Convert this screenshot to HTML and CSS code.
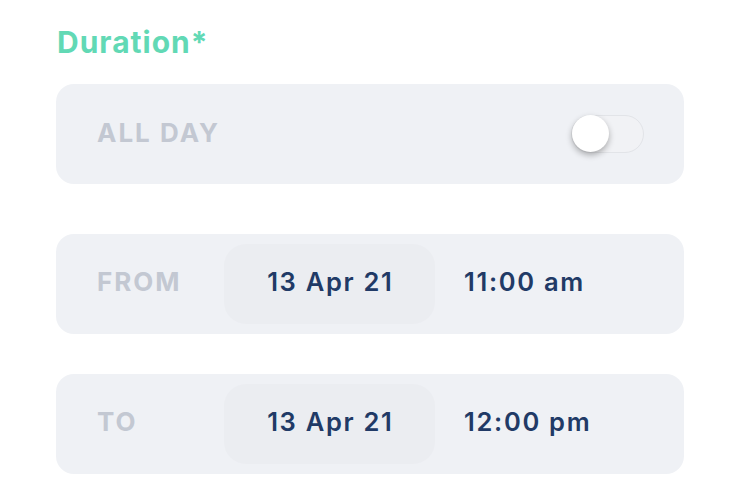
FILE: index.html
```html
<!DOCTYPE html>
<html>
<head>
<meta charset="utf-8">
<link rel="stylesheet" href="styles.css">
</head>
<body>
<div class="form">
  <h2 class="title">Duration*</h2>
  <div class="card allday">
    <span class="label">ALL DAY</span>
    <div class="toggle"><div class="knob"></div></div>
  </div>
  <div class="card row first">
    <span class="label col">FROM</span>
    <div class="datebox">13 Apr 21</div>
    <span class="time">11:00 am</span>
  </div>
  <div class="card row">
    <span class="label col">TO</span>
    <div class="datebox">13 Apr 21</div>
    <span class="time">12:00 pm</span>
  </div>
</div>
</body>
</html>
```
FILE: styles.css
```css
html, body {
  margin: 0;
  padding: 0;
  background: #ffffff;
}
body {
  font-family: Inter, "Noto Sans", sans-serif;
}
.form {
  padding: 0 52px 0 56px;
  display: flex;
  flex-direction: column;
}
.title {
  margin: 24px 0 0 1px;
  height: 60px;
  font-size: 30px;
  line-height: 36px;
  font-weight: 700;
  color: #62d9b5;
  letter-spacing: 1px;
}
.card {
  height: 100px;
  border-radius: 18px;
  background: #eff1f5;
  display: flex;
  align-items: center;
  padding-left: 41px;
  box-sizing: border-box;
}
.allday {
  justify-content: space-between;
  padding-right: 40px;
}
.label {
  font-size: 26px;
  font-weight: 700;
  color: #c3c8d2;
  letter-spacing: 2px;
}
.allday .label {
  margin-bottom: 4px;
}
.row {
  margin-top: 40px;
}
.row.first {
  margin-top: 50px;
}
.col {
  width: 127px;
  margin-bottom: 5px;
}
.datebox {
  width: 211px;
  height: 80px;
  border-radius: 22px;
  background: #ebedf1;
  display: flex;
  align-items: center;
  justify-content: center;
  box-sizing: border-box;
  padding-bottom: 5px;
  font-size: 25.5px;
  font-weight: 600;
  color: #213a66;
  letter-spacing: 1.7px;
  text-indent: 1.7px;
}
.time {
  margin-left: 29px;
  margin-bottom: 5px;
  font-size: 25.5px;
  font-weight: 600;
  color: #213a66;
  letter-spacing: 1.7px;
}
.toggle {
  width: 73px;
  height: 38px;
  border-radius: 19px;
  border: 1.5px solid #e2e4e8;
  background: #f1f2f5;
  box-sizing: border-box;
  position: relative;
  margin-bottom: 1px;
}
.knob {
  position: absolute;
  left: 0;
  top: -0.5px;
  width: 37px;
  height: 37px;
  border-radius: 50%;
  background: #ffffff;
  box-shadow: 0 3px 6px rgba(0, 0, 0, 0.3);
}
```
